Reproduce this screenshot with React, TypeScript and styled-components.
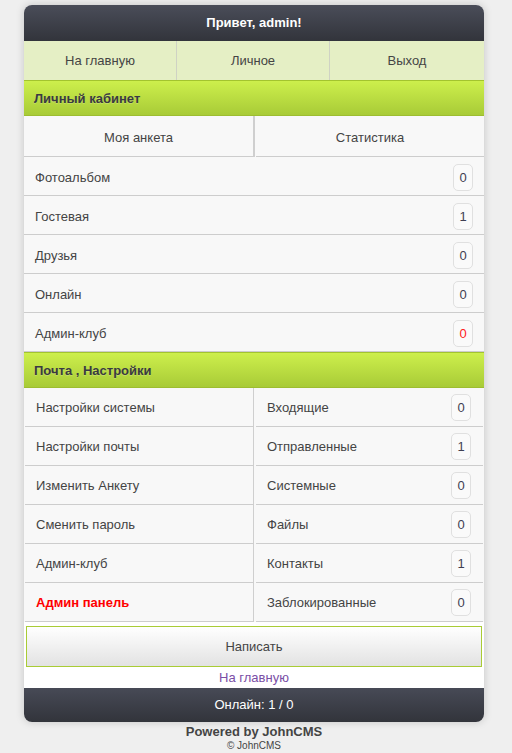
import React from "react";
import styled, { createGlobalStyle } from "styled-components";

const Global = createGlobalStyle`
  html, body { margin: 0; padding: 0; background: #efefef; }
  body { font-family: "Liberation Sans", Arial, sans-serif; font-size: 13px; color: #444; }
`;

const Page = styled.div`
  width: 460px;
  margin: 5px 0 0 24px;
`;

const Card = styled.div`
  background: #f8f8f8;
  border-radius: 8px;
  box-shadow: 0 0 8px rgba(0, 0, 0, 0.18);
  overflow: hidden;
`;

const Header = styled.div`
  height: 36px;
  line-height: 36px;
  text-align: center;
  color: #fff;
  font-weight: bold;
  font-size: 13px;
  background: linear-gradient(#4a4d59, #32343b);
`;

const Nav = styled.div`
  display: grid;
  grid-template-columns: 153px 153px 1fr;
  height: 39px;
  background: #e5efc5;
`;

const NavItem = styled.div<{ $last?: boolean }>`
  display: flex;
  align-items: center;
  justify-content: center;
  border-right: ${(p) => (p.$last ? "none" : "1px solid #cfd2c4")};
  color: #444;
`;

const Section = styled.div`
  height: 34px;
  display: flex;
  align-items: center;
  padding-left: 10px;
  font-weight: bold;
  color: #3a3a42;
  border-top: 1px solid #a3c42e;
  border-bottom: 1px solid #9dbd30;
  background: linear-gradient(#cdef4c, #a8cb37);
  text-shadow: 0 1px 0 rgba(255, 255, 255, 0.2);
`;

const Tabs = styled.div`
  display: grid;
  grid-template-columns: 232px 1fr;
  height: 41px;
`;

const Tab = styled.div<{ $first?: boolean }>`
  display: flex;
  align-items: center;
  justify-content: center;
  border-bottom: 1px solid #cdcdcd;
  border-right: ${(p) => (p.$first ? "2px solid #cfcfcf" : "none")};
  margin-right: ${(p) => (p.$first ? "1px" : "0")};
  color: #444;
  padding-top: 2px;
`;

const Row = styled.div`
  box-sizing: border-box;
  height: 39px;
  display: flex;
  align-items: center;
  justify-content: space-between;
  padding: 2px 11px 0 11px;
  border-bottom: 1px solid #cdcdcd;
  color: #444;
`;

const Badge = styled.span<{ $red?: boolean }>`
  display: inline-flex;
  align-items: center;
  justify-content: center;
  width: 18px;
  height: 25px;
  border: 1px solid #e0e0e0;
  border-radius: 5px;
  background: #fafafa;
  color: ${(p) => (p.$red ? "#ff1a1a" : "#3f3f52")};
`;

const Grid = styled.div`
  display: grid;
  grid-template-columns: 229px 1fr;
  column-gap: 2px;
  background: linear-gradient(to right, transparent 229px, #cfcfcf 229px, #cfcfcf 230px, transparent 230px);
  padding-left: 1px;
`;

const Cell = styled.div<{ $right?: boolean }>`
  box-sizing: border-box;
  height: 39px;
  display: flex;
  align-items: center;
  justify-content: space-between;
  padding: ${(p) => (p.$right ? "1px 12px 0 11px" : "1px 0 0 11px")};
  border-bottom: 1px solid #cdcdcd;
  margin-right: ${(p) => (p.$right ? "1px" : "0")};
  color: #444;
`;

const AdminText = styled.span`
  color: #ff0000;
  font-weight: bold;
`;

const WriteWrap = styled.div`
  background: #fff;
  padding: 4px 2px 0;
`;

const WriteButton = styled.div`
  height: 39px;
  display: flex;
  align-items: center;
  justify-content: center;
  border: 1px solid #a9cc35;
  background: linear-gradient(#ffffff, #e2e2e2);
  color: #444;
`;

const HomeLink = styled.div`
  background: #fff;
  height: 21px;
  line-height: 22px;
  text-align: center;
  color: #7a4ea6;
`;

const Footer = styled.div`
  height: 34px;
  line-height: 34px;
  text-align: center;
  color: #fff;
  background: linear-gradient(#474a56, #32343b);
`;

const Powered = styled.div`
  text-align: center;
  font-weight: bold;
  color: #444;
  margin-top: 2px;
  line-height: 16px;
`;

const Copy = styled.div`
  text-align: center;
  font-size: 10px;
  color: #444;
  line-height: 12px;
`;

const list: [string, string, boolean?][] = [
  ["Фотоальбом", "0"],
  ["Гостевая", "1"],
  ["Друзья", "0"],
  ["Онлайн", "0"],
  ["Админ-клуб", "0", true],
];

const leftCol = [
  "Настройки системы",
  "Настройки почты",
  "Изменить Анкету",
  "Сменить пароль",
  "Админ-клуб",
];

const rightCol: [string, string][] = [
  ["Входящие", "0"],
  ["Отправленные", "1"],
  ["Системные", "0"],
  ["Файлы", "0"],
  ["Контакты", "1"],
  ["Заблокированные", "0"],
];

export default function App() {
  const cells: React.ReactNode[] = [];
  for (let i = 0; i < 6; i++) {
    cells.push(
      <Cell key={"l" + i}>
        {i < 5 ? leftCol[i] : <AdminText>Админ панель</AdminText>}
      </Cell>
    );
    cells.push(
      <Cell key={"r" + i} $right>
        {rightCol[i][0]}
        <Badge>{rightCol[i][1]}</Badge>
      </Cell>
    );
  }
  return (
    <>
      <Global />
      <Page>
        <Card>
          <Header>Привет, admin!</Header>
          <Nav>
            <NavItem>На главную</NavItem>
            <NavItem>Личное</NavItem>
            <NavItem $last>Выход</NavItem>
          </Nav>
          <Section>Личный кабинет</Section>
          <Tabs>
            <Tab $first>Моя анкета</Tab>
            <Tab>Статистика</Tab>
          </Tabs>
          {list.map(([t, n, red]) => (
            <Row key={t}>
              {t}
              <Badge $red={red}>{n}</Badge>
            </Row>
          ))}
          <Section>Почта , Настройки</Section>
          <Grid>{cells}</Grid>
          <WriteWrap>
            <WriteButton>Написать</WriteButton>
          </WriteWrap>
          <HomeLink>На главную</HomeLink>
          <Footer>Онлайн: 1 / 0</Footer>
        </Card>
        <Powered>Powered by JohnCMS</Powered>
        <Copy>© JohnCMS</Copy>
      </Page>
    </>
  );
}
